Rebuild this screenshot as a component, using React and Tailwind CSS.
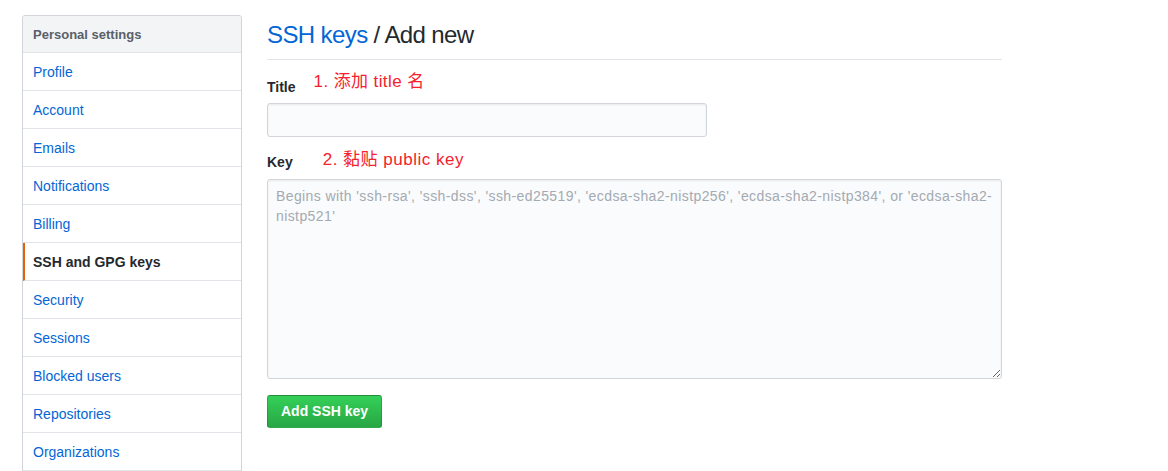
const items = [
  'Profile',
  'Account',
  'Emails',
  'Notifications',
  'Billing',
  'SSH and GPG keys',
  'Security',
  'Sessions',
  'Blocked users',
  'Repositories',
  'Organizations'
]

export default function App() {
  return (
    <div
      className="h-[471px] overflow-hidden bg-white text-[#24292e] flex gap-[25px] pl-[22px] pt-[15px]"
      style={{ fontFamily: '"Liberation Sans", "Noto Sans CJK SC", sans-serif' }}
    >
      <nav className="w-[220px] shrink-0 self-start border border-[#d1d5da] rounded-t-[3px]">
        <div className="h-[37px] px-[10px] pt-[1px] flex items-center bg-[#f3f4f6] text-[13px] font-bold text-[#586069] border-b border-[#e1e4e8] rounded-t-[3px]">
          Personal settings
        </div>
        {items.map((item) => {
          const active = item === 'SSH and GPG keys'
          return (
            <div
              key={item}
              className={
                active
                  ? 'h-[38px] pl-[8px] pr-[10px] pt-[1px] flex items-center text-[14px] font-bold text-[#24292e] border-l-2 border-l-[#e36209] border-b border-b-[#e1e4e8]'
                  : 'h-[38px] px-[10px] pt-[1px] flex items-center text-[14px] text-[#0366d6] border-b border-[#e1e4e8]'
              }
            >
              {item}
            </div>
          )
        })}
      </nav>

      <main className="w-[735px] shrink-0">
        <div className="h-[45px] pb-[4px] flex items-center border-b border-[#e1e4e8] text-[24px] tracking-[-0.6px]">
          <span className="text-[#0366d6]">SSH keys</span>
          <span className="ml-[6px]">/ Add new</span>
        </div>

        <div className="mt-[17px] h-[20px] flex items-center gap-[18px]">
          <span className="text-[14px] font-bold leading-[20px]">Title</span>
          <span className="relative -top-[5px] text-[17px] tracking-[0.4px] text-[#f5222d] leading-[22px]">1. 添加 title 名</span>
        </div>
        <input
          className="mt-[6px] block w-[440px] h-[34px] bg-[#fafbfc] border border-[#d1d5da] rounded-[3px] shadow-[inset_0_1px_2px_rgba(27,31,35,0.075)]"
        />

        <div className="mt-[15px] h-[20px] flex items-center gap-[30px]">
          <span className="text-[14px] font-bold leading-[20px]">Key</span>
          <span className="relative -top-[2px] text-[17px] tracking-[0.5px] text-[#f5222d] leading-[22px]">2. 黏贴 public key</span>
        </div>
        <textarea
          className="mt-[7px] block w-[735px] h-[200px] bg-[#fafbfc] border border-[#d1d5da] rounded-[3px] px-[8px] py-[6px] text-[14px] leading-[20px] tracking-[0.4px] placeholder:text-[#a3aab1] shadow-[inset_0_1px_2px_rgba(27,31,35,0.075)]"
          placeholder="Begins with 'ssh-rsa', 'ssh-dss', 'ssh-ed25519', 'ecdsa-sha2-nistp256', 'ecdsa-sha2-nistp384', or 'ecdsa-sha2-nistp521'"
        />

        <button className="mt-[16px] h-[33px] px-[13px] rounded-[3px] text-white text-[14px] font-bold bg-gradient-to-b from-[#34d058] to-[#28a745] border border-[rgba(27,31,35,0.2)]">
          Add SSH key
        </button>
      </main>
    </div>
  )
}
